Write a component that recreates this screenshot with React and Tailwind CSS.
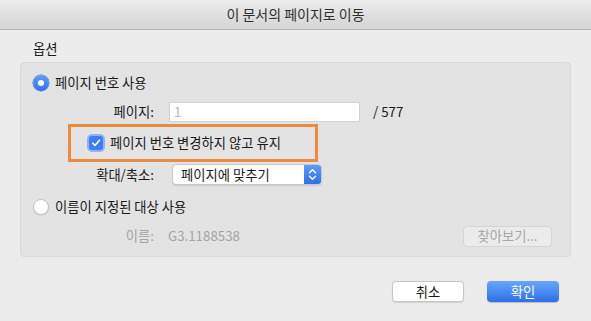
import React from 'react';

const font = { fontFamily: '"Noto Sans CJK KR", "Noto Sans", sans-serif' };

const Radio = ({ checked }) =>
  checked ? (
    <span className="flex h-[16px] w-[16px] items-center justify-center rounded-full bg-gradient-to-b from-[#5f9cf6] to-[#2f73ea] shadow-[0_0_0_0.5px_#3b78d8]">
      <span className="h-[6px] w-[6px] rounded-full bg-white" />
    </span>
  ) : (
    <span className="h-[16px] w-[16px] rounded-full border border-[#c4c4c4] bg-white shadow-[0_0.5px_1px_rgba(0,0,0,0.12)]" />
  );

const Label = ({ children, muted }) => (
  <div className={`w-[133px] shrink-0 text-right ${muted ? 'text-[#a5a5a5]' : 'text-[#1a1a1a]'}`}>
    {children}
  </div>
);

export default function App() {
  return (
    <div className="h-[321px] w-[591px] overflow-hidden bg-[#ececec] text-[13.3px] text-[#1a1a1a]" style={font}>
      <div className="flex h-[30px] items-center justify-center border-b border-[#b4b4b4] bg-gradient-to-b from-[#ebebeb] to-[#d5d5d5] text-[14px] text-[#2e2e2e]">
        이 문서의 페이지로 이동
      </div>

      <div className="px-[20px]">
        <div className="flex h-[32px] items-end pb-[4px] pl-[13px] leading-[18px]">옵션</div>

        <div className="h-[195px] rounded-[4px] border border-[#d9d9d9] bg-[#e3e3e3]">
          <div className="mt-[10px] flex h-[20px] items-center gap-[6px] pl-[12px]">
            <Radio checked />
            <span>페이지 번호 사용</span>
          </div>

          <div className="mt-[9px] flex h-[20px] items-center">
            <Label>페이지:</Label>
            <div className="ml-[15px] flex h-[20px] w-[191px] items-center border border-[#d2d2d2] bg-white px-[4px] text-[#b9b9b9]">
              1
            </div>
            <span className="ml-[13px]">/ 577</span>
          </div>

          <div className="ml-[47px] mt-[2px] flex h-[38px] w-[250px] items-center border-[3px] border-[#ef8a3c]">
            <div className="ml-[16px] flex h-[18px] w-[18px] items-center justify-center rounded-[5px] bg-[#8fb3f2] p-[2px]">
              <span className="flex h-[14px] w-[14px] items-center justify-center rounded-[3px] bg-[#3f7ff0]">
                <svg width="10" height="10" viewBox="0 0 10 10">
                  <path d="M1.8 5.2 L4 7.4 L8.4 2.2" fill="none" stroke="white" strokeWidth="1.6" strokeLinecap="round" strokeLinejoin="round" />
                </svg>
              </span>
            </div>
            <span className="ml-[5px]">페이지 번호 변경하지 않고 유지</span>
          </div>

          <div className="mt-[2px] flex h-[21px] items-center">
            <Label>확대/축소:</Label>
            <div className="ml-[18px] flex h-[21px] w-[150px] items-center overflow-hidden rounded-[4px] border border-[#c9c9c9] bg-white shadow-[0_0.5px_1px_rgba(0,0,0,0.1)]">
              <span className="flex-1 pl-[8px]">페이지에 맞추기</span>
              <span className="flex h-full w-[17px] items-center justify-center bg-gradient-to-b from-[#5d9cf7] to-[#2f6fea]">
                <svg width="9" height="13" viewBox="0 0 9 13">
                  <path d="M1.5 4.8 L4.5 1.8 L7.5 4.8 M1.5 8.2 L4.5 11.2 L7.5 8.2" fill="none" stroke="white" strokeWidth="1.3" strokeLinecap="round" strokeLinejoin="round" />
                </svg>
              </span>
            </div>
          </div>

          <div className="mt-[12px] flex h-[20px] items-center gap-[6px] pl-[12px]">
            <Radio />
            <span>이름이 지정된 대상 사용</span>
          </div>

          <div className="mt-[8px] flex h-[22px] items-center">
            <Label muted>이름:</Label>
            <span className="ml-[14px] text-[#a5a5a5]">G3.1188538</span>
            <div className="ml-auto mr-[18px] flex h-[21px] w-[89px] items-center justify-center rounded-[4px] border border-[#d4d4d4] bg-[#ebebeb] text-[#a8a8a8]">
              찾아보기...
            </div>
          </div>
        </div>

        <div className="mt-[24px] flex justify-end gap-[23px] pr-[12px]">
          <div className="flex h-[21px] w-[72px] items-center justify-center rounded-[4px] border border-[#c8c8c8] bg-white shadow-[0_0.5px_1px_rgba(0,0,0,0.12)]">
            취소
          </div>
          <div className="flex h-[21px] w-[72px] items-center justify-center rounded-[4px] bg-gradient-to-b from-[#69a6f8] to-[#2e6fe9] text-white shadow-[0_0.5px_1px_rgba(0,0,0,0.2)]">
            확인
          </div>
        </div>
      </div>
    </div>
  );
}
